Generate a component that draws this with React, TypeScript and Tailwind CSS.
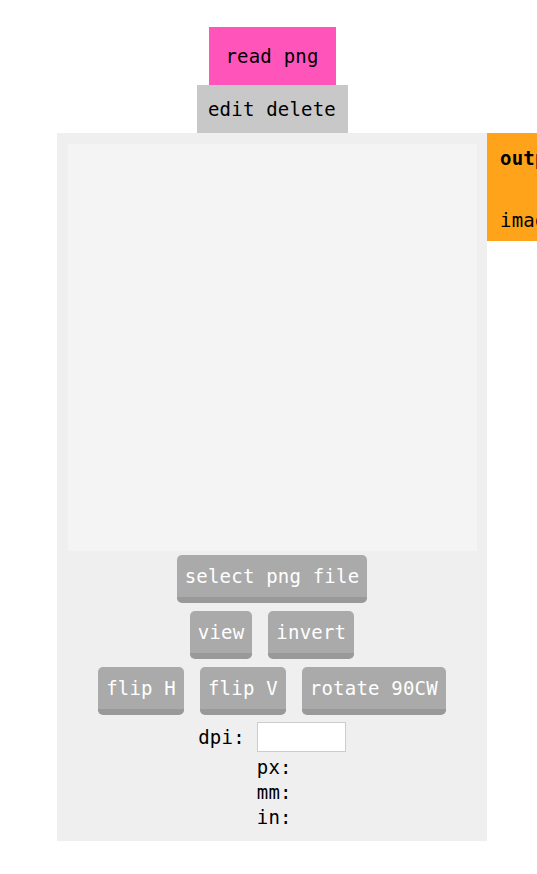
const mono = "font-['DejaVu_Sans_Mono',monospace] text-[19px] tracking-[0.2px]";

function Btn({ label }: { label: string }) {
  return (
    <button
      className={`${mono} h-[48px] rounded-[5px] border-b-[6px] border-[#999999] bg-[#aaaaaa] px-2 leading-[42px] text-white`}
    >
      {label}
    </button>
  );
}

function SizeReadout() {
  return (
    <div className={`${mono} mt-[7px] grid grid-cols-[auto_auto] items-center gap-x-3 text-black`}>
      <span>dpi:</span>
      <input className="h-[30px] w-[89px] border border-[#cccccc] bg-white" />
      <span />
      <div className="flex flex-col pt-[3px] leading-[25px]">
        <span>px:</span>
        <span>mm:</span>
        <span>in:</span>
      </div>
    </div>
  );
}

export default function App() {
  return (
    <div className="h-[874px] w-[537px] overflow-hidden bg-white">
      <div className="ml-[57px] mt-[27px] flex w-[430px] flex-col items-center">
        <div className={`${mono} flex h-[58px] w-[127px] items-center justify-center bg-[#ff55bb] text-black`}>
          read png
        </div>
        <div className={`${mono} flex h-[48px] w-[151px] items-center justify-center bg-[#c8c8c8] text-black`}>
          edit delete
        </div>
      </div>

      <div className="ml-[57px] flex items-start">
        {/* node body */}
        <div className="flex w-[430px] shrink-0 flex-col items-center bg-[#efefef] px-[11px] pb-[11px] pt-[11px]">
          <div className="h-[407px] w-[409px] bg-[#f4f4f4]" />
          <div className="mt-1 flex flex-col items-center gap-2">
            <Btn label="select png file" />
            <div className="flex gap-4">
              <Btn label="view" />
              <Btn label="invert" />
            </div>
            <div className="flex gap-4">
              <Btn label="flip H" />
              <Btn label="flip V" />
              <Btn label="rotate 90CW" />
            </div>
          </div>
          <SizeReadout />
        </div>

        {/* output port */}
        <div className={`${mono} h-[108px] w-[140px] shrink-0 bg-[#ffa31a] pl-[13px] text-black`}>
          <div className="mt-[13px] font-bold leading-[24px]">output</div>
          <div className="mt-[38px] leading-[24px]">image</div>
        </div>
      </div>
    </div>
  );
}
